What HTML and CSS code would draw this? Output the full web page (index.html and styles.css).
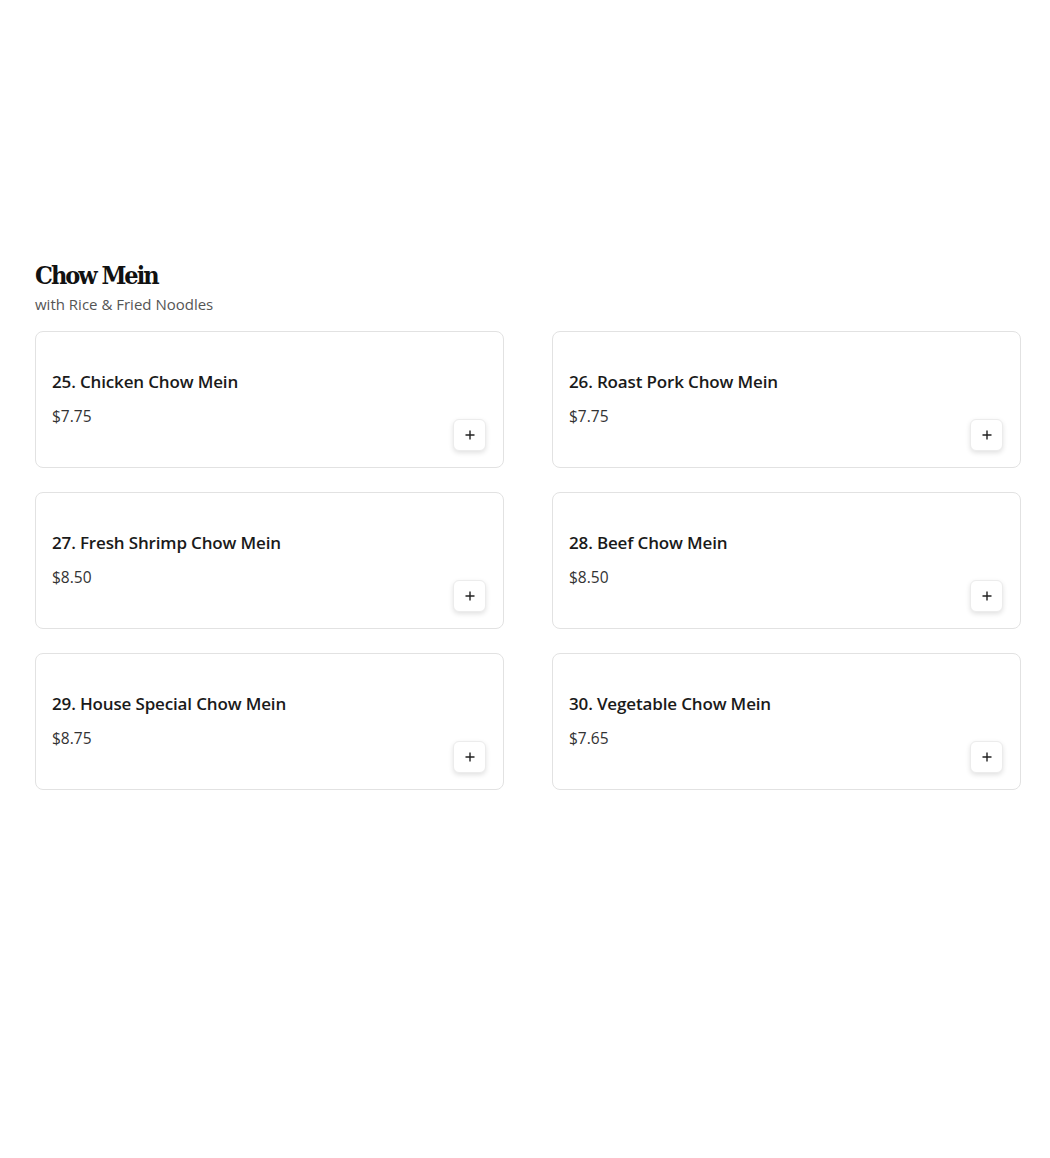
FILE: index.html
```html
<!DOCTYPE html>
<html>
<head>
<meta charset="utf-8">
<link rel="stylesheet" href="styles.css">
</head>
<body>
<main class="page">
  <section class="category">
    <h2 class="cat-title">Chow Mein</h2>
    <p class="cat-sub">with Rice &amp; Fried Noodles</p>
    <div class="grid">
      <div class="card"><div class="info"><div class="name">25. Chicken Chow Mein</div><div class="price">$7.75</div></div><button class="add"><svg viewBox="0 0 12 12" width="12" height="12"><path d="M6 1.5v9M1.5 6h9" stroke="#222" stroke-width="1.4" fill="none"/></svg></button></div>
      <div class="card"><div class="info"><div class="name">26. Roast Pork Chow Mein</div><div class="price">$7.75</div></div><button class="add"><svg viewBox="0 0 12 12" width="12" height="12"><path d="M6 1.5v9M1.5 6h9" stroke="#222" stroke-width="1.4" fill="none"/></svg></button></div>
      <div class="card"><div class="info"><div class="name">27. Fresh Shrimp Chow Mein</div><div class="price">$8.50</div></div><button class="add"><svg viewBox="0 0 12 12" width="12" height="12"><path d="M6 1.5v9M1.5 6h9" stroke="#222" stroke-width="1.4" fill="none"/></svg></button></div>
      <div class="card"><div class="info"><div class="name">28. Beef Chow Mein</div><div class="price">$8.50</div></div><button class="add"><svg viewBox="0 0 12 12" width="12" height="12"><path d="M6 1.5v9M1.5 6h9" stroke="#222" stroke-width="1.4" fill="none"/></svg></button></div>
      <div class="card"><div class="info"><div class="name">29. House Special Chow Mein</div><div class="price">$8.75</div></div><button class="add"><svg viewBox="0 0 12 12" width="12" height="12"><path d="M6 1.5v9M1.5 6h9" stroke="#222" stroke-width="1.4" fill="none"/></svg></button></div>
      <div class="card"><div class="info"><div class="name">30. Vegetable Chow Mein</div><div class="price">$7.65</div></div><button class="add"><svg viewBox="0 0 12 12" width="12" height="12"><path d="M6 1.5v9M1.5 6h9" stroke="#222" stroke-width="1.4" fill="none"/></svg></button></div>
    </div>
  </section>
</main>
</body>
</html>
```
FILE: styles.css
```css
* { box-sizing: border-box; }
html, body { margin: 0; padding: 0; background: #fff; }
body { font-family: "Open Sans", "Noto Sans", sans-serif; color: #1a1a1a; }
.page { padding: 259px 29px 0 35px; }
.cat-title {
  margin: 0;
  font-family: "DejaVu Serif", "Liberation Serif", serif;
  font-stretch: condensed;
  font-weight: 900;
  font-size: 25px;
  line-height: 34px;
  letter-spacing: -2px;
  color: #111;
}
.cat-sub {
  margin: 2px 0 0;
  font-size: 15px;
  line-height: 18px;
  color: #555;
}
.grid {
  margin-top: 18px;
  display: grid;
  grid-template-columns: 1fr 1fr;
  column-gap: 48px;
  row-gap: 24px;
}
.card {
  border: 1px solid #e2e2e2;
  border-radius: 8px;
  padding: 16px 17px 16px 16px;
  display: flex;
  justify-content: space-between;
  align-items: flex-end;
  height: 137px;
}
.info { margin-top: 22px; align-self: flex-start; }
.name { font-size: 17px; line-height: 24px; font-weight: 600; color: #1a1a1a; letter-spacing: -0.15px; }
.price { margin-top: 10px; font-size: 15.5px; line-height: 24px; color: #333; }
.add {
  width: 33px; height: 32px;
  border: 1px solid #ececec;
  border-radius: 6px;
  background: #fff;
  box-shadow: 0 2px 5px rgba(0,0,0,0.12);
  display: flex; align-items: center; justify-content: center;
  padding: 0;
}
```
